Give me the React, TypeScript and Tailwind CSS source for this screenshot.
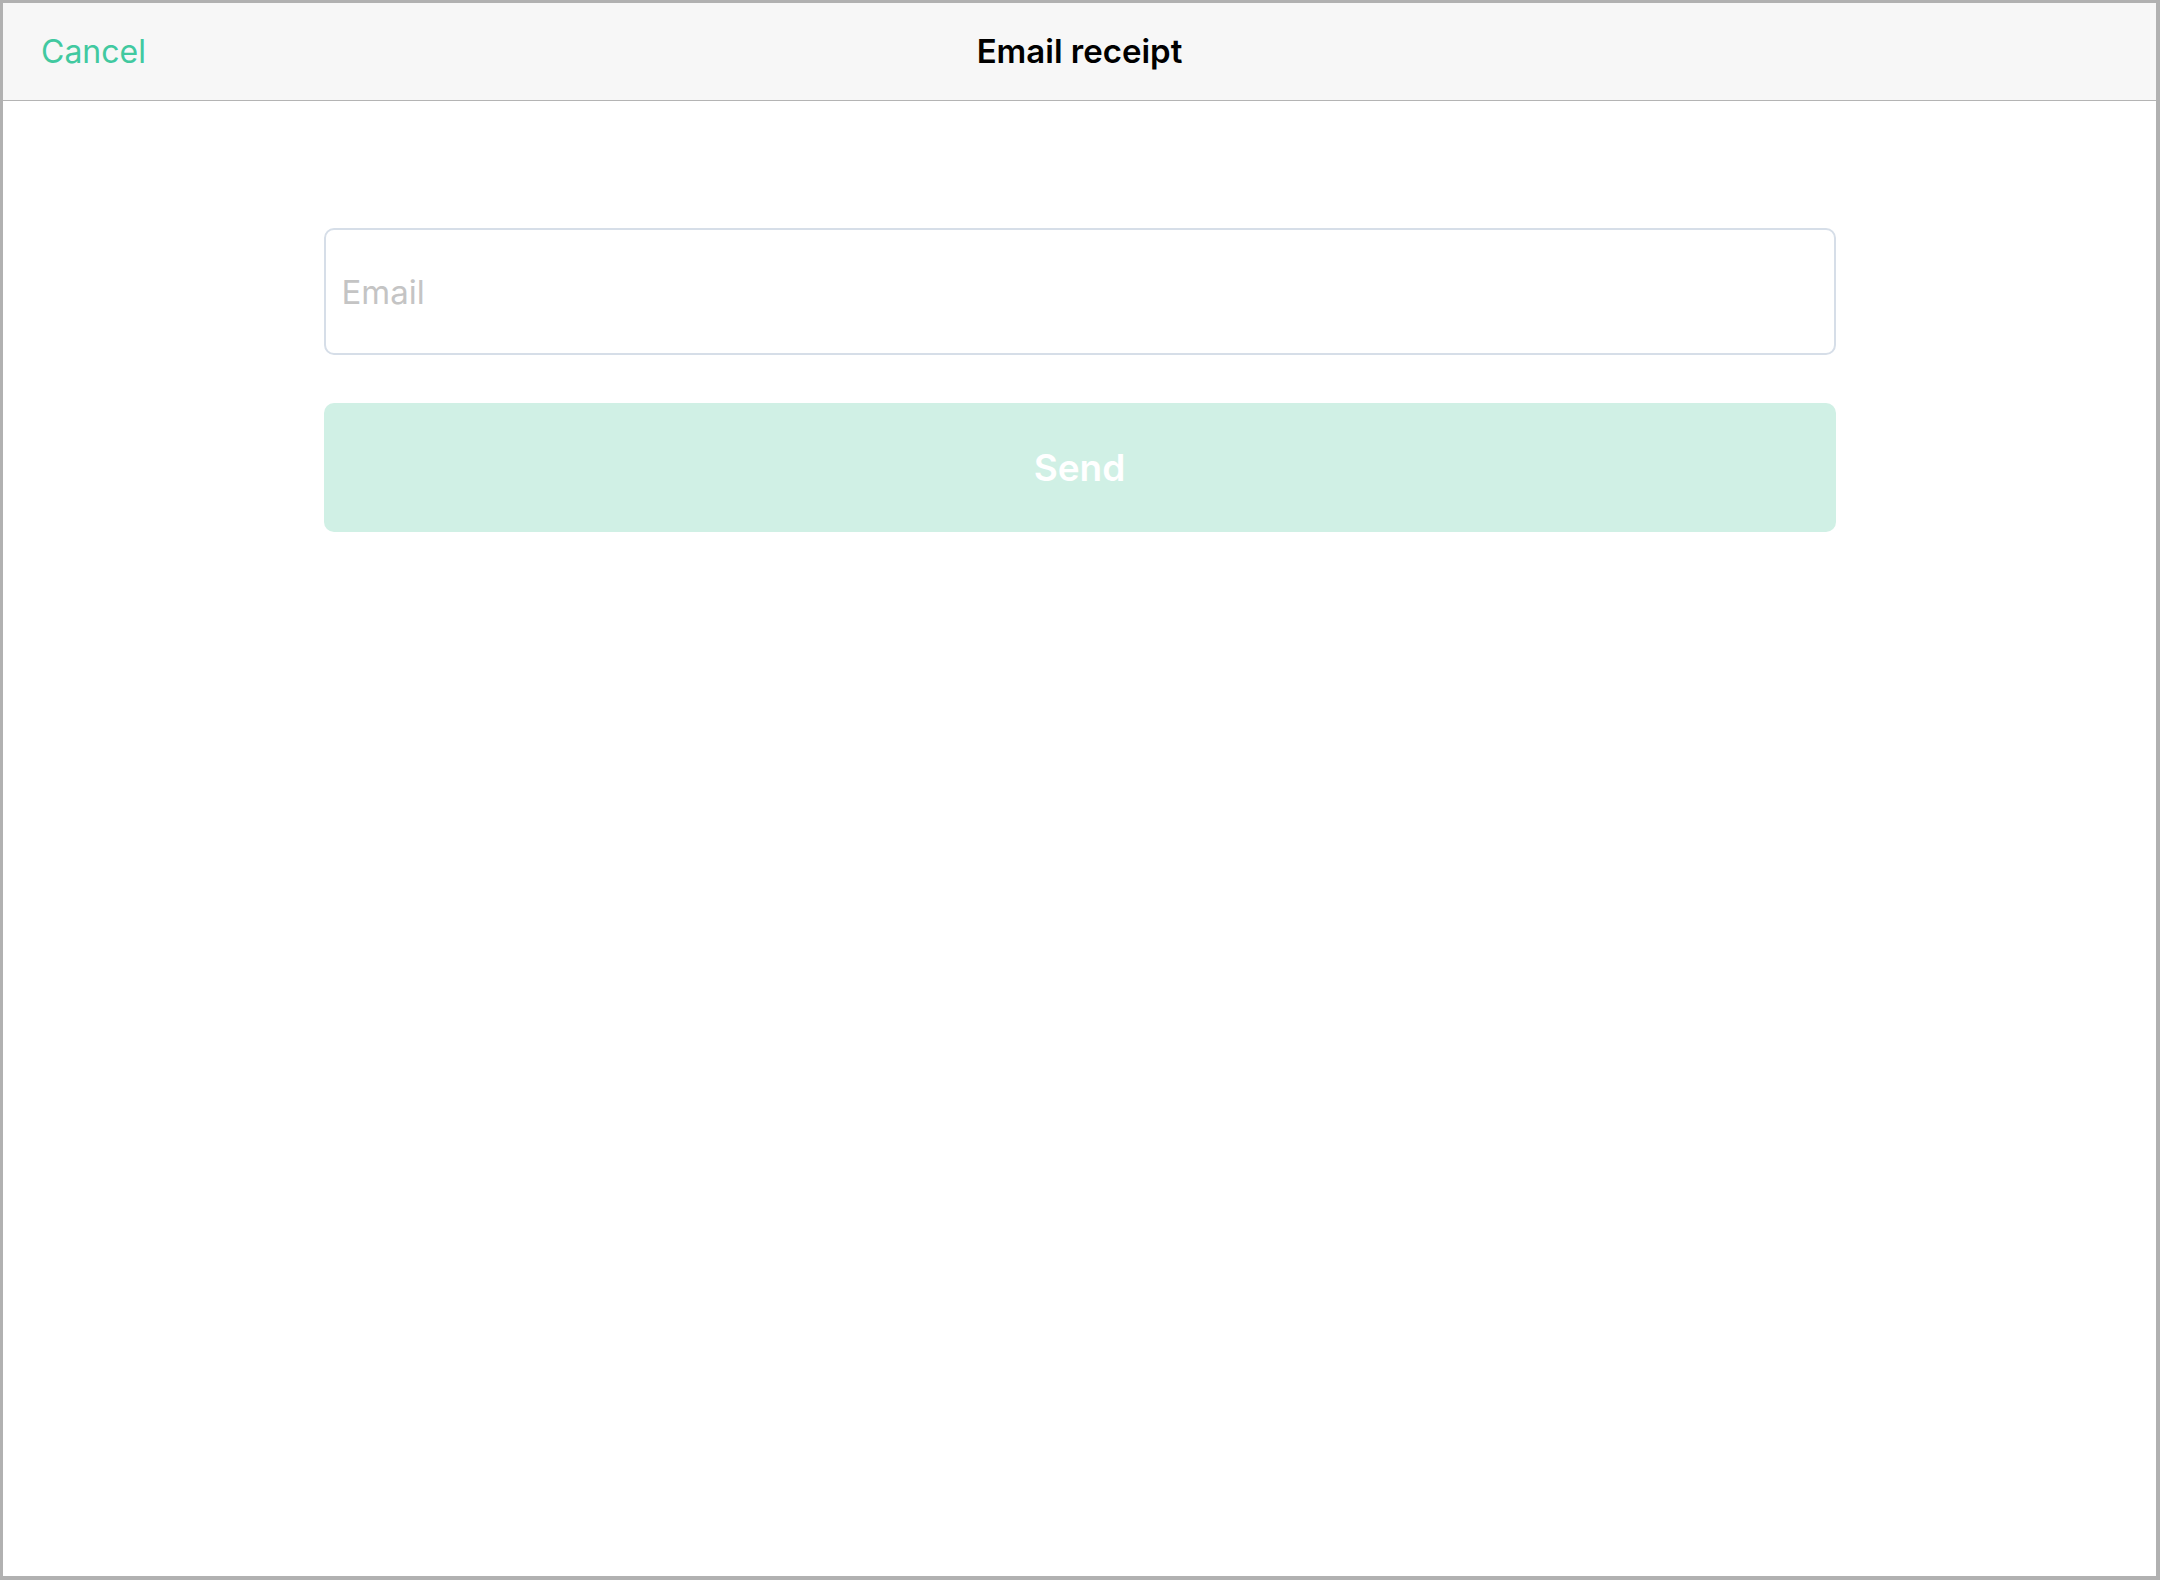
import { useState } from "react";

export default function App() {
  const [email, setEmail] = useState("");

  return (
    <div className="flex h-[1580px] w-full flex-col border-t-[3px] border-r-4 border-b-4 border-l-[3px] border-[#b1b1b1] bg-white font-['Inter',sans-serif]">
      <header className="grid h-[98px] shrink-0 grid-cols-[1fr_auto_1fr] items-center border-b border-[#b4b4b4] bg-[#f7f7f7] px-[38px]">
        <button className="justify-self-start text-[32px] leading-none text-[#41c9a0]">Cancel</button>
        <h1 className="text-[33px] leading-none font-semibold text-black">Email receipt</h1>
        <div />
      </header>

      <main className="mx-auto flex w-[1512px] flex-col gap-[48px] pt-[127px]">
        <input
          type="email"
          value={email}
          onChange={(e) => setEmail(e.target.value)}
          placeholder="Email"
          className="h-[127px] w-full rounded-[10px] border-2 border-[#d6dee8] bg-white pl-4 text-[33px] text-black outline-none placeholder:text-[#c4c4c4]"
        />
        <button
          disabled={!email}
          className="h-[129px] w-full rounded-[10px] bg-[#d0f0e5] text-[37px] font-semibold text-white"
        >
          Send
        </button>
      </main>
    </div>
  );
}
